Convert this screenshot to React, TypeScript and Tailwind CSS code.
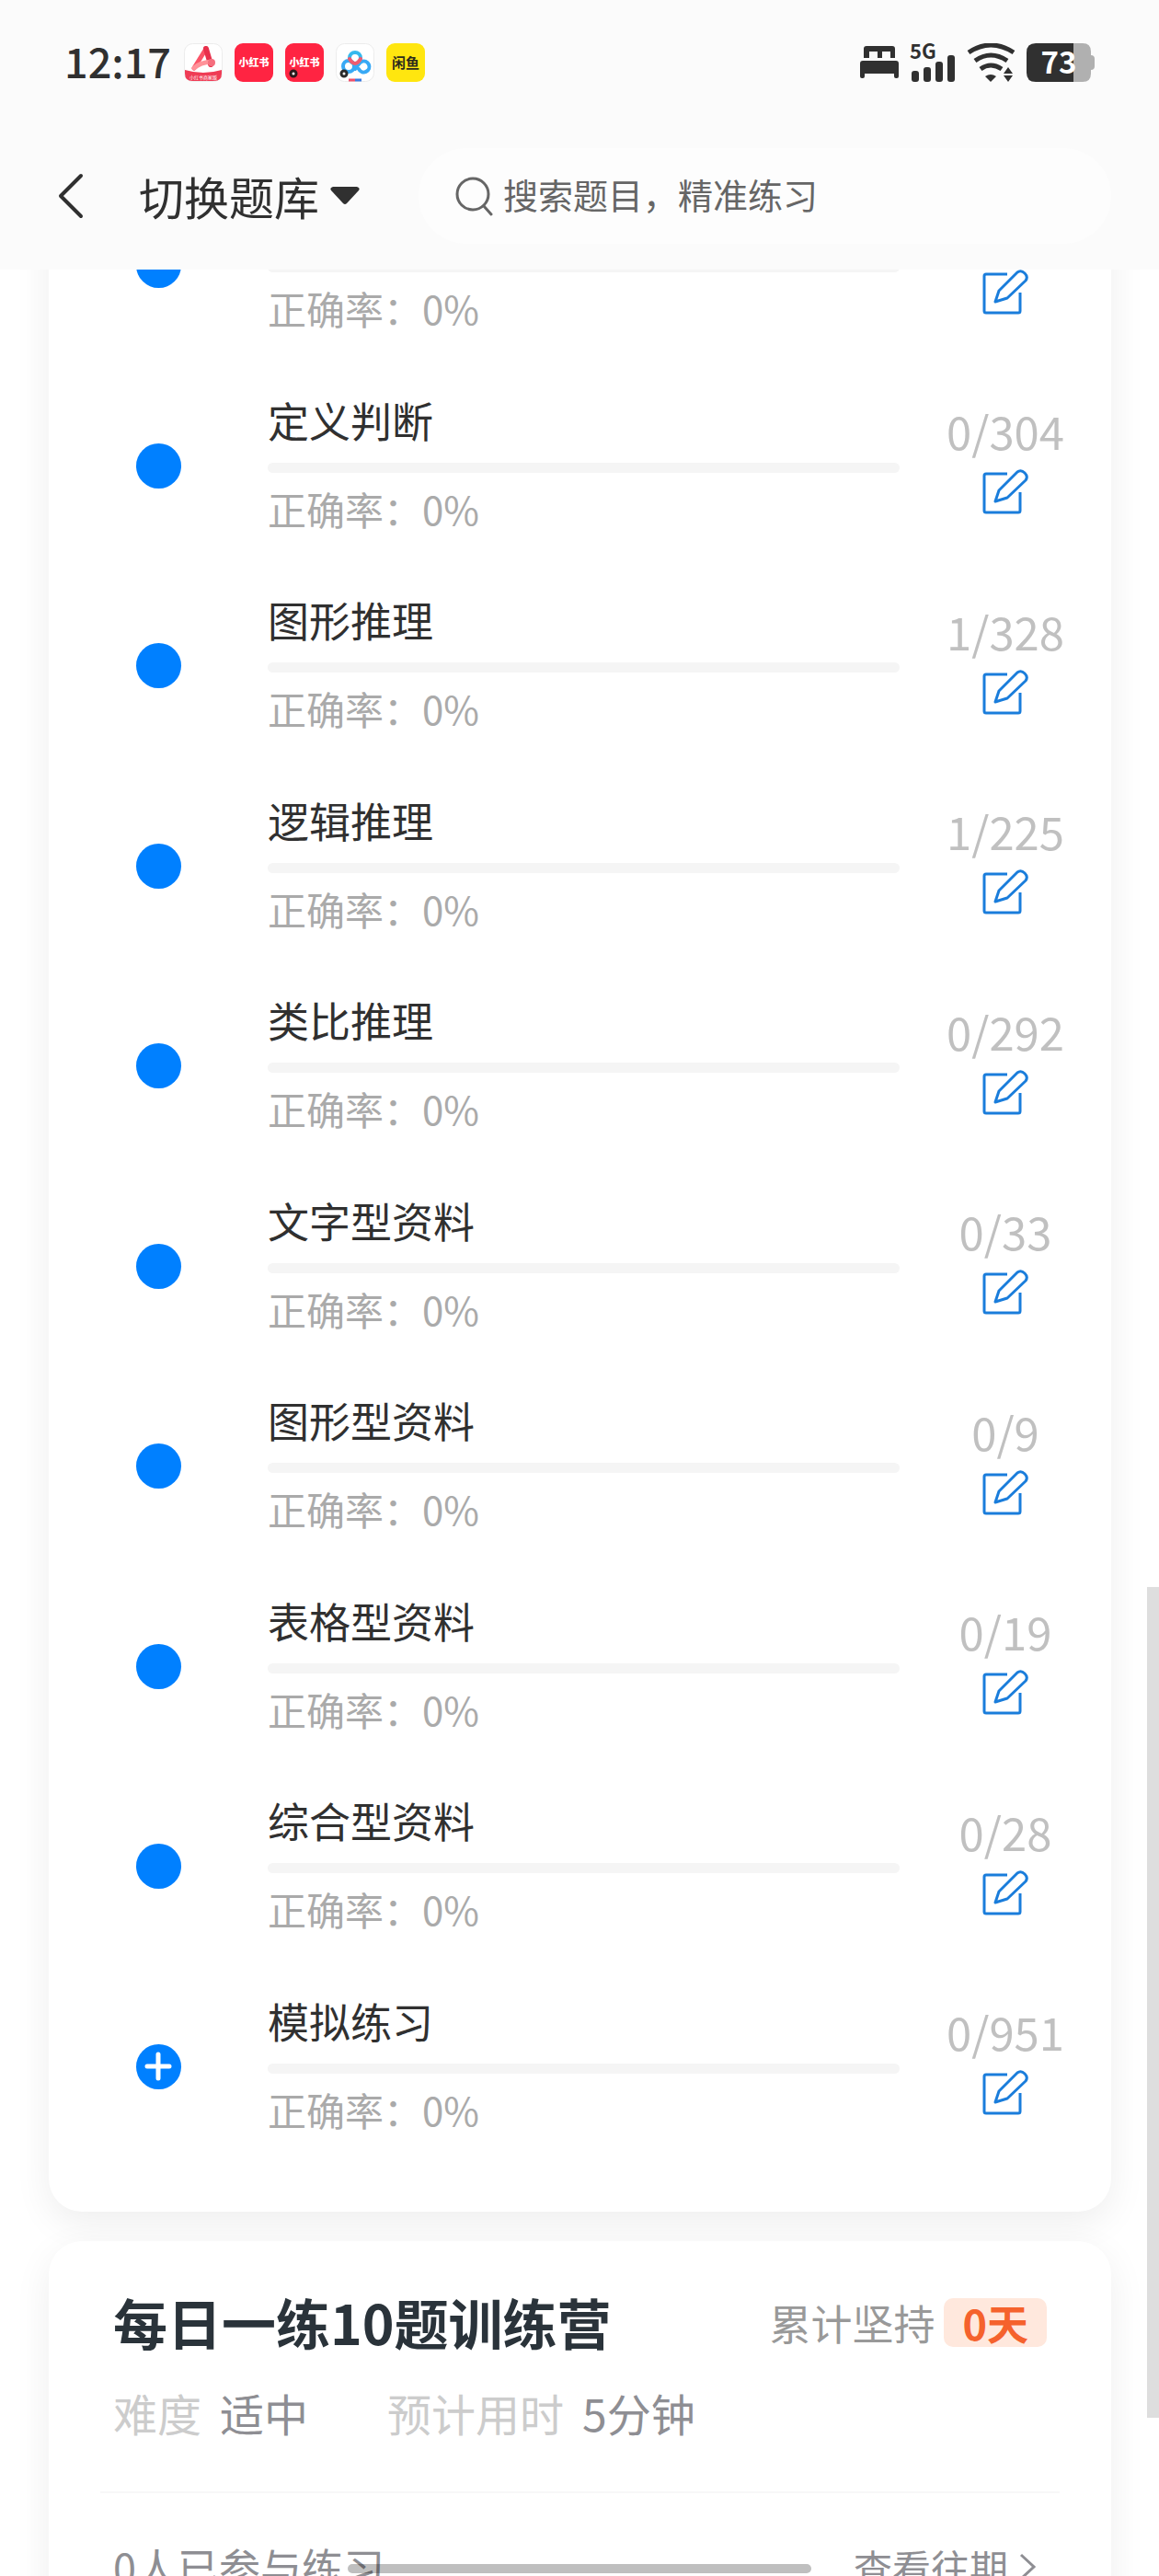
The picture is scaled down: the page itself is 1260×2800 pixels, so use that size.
import { useState } from 'react'

interface Topic {
  id: string
  name: string
  count: string
  expandable?: boolean
}

const topics: Topic[] = [
  { id: 'previous', name: '', count: '' },
  { id: 'definition', name: '定义判断', count: '0/304' },
  { id: 'figure', name: '图形推理', count: '1/328' },
  { id: 'logic', name: '逻辑推理', count: '1/225' },
  { id: 'analogy', name: '类比推理', count: '0/292' },
  { id: 'text-data', name: '文字型资料', count: '0/33' },
  { id: 'figure-data', name: '图形型资料', count: '0/9' },
  { id: 'table-data', name: '表格型资料', count: '0/19' },
  { id: 'mixed-data', name: '综合型资料', count: '0/28' },
  { id: 'mock', name: '模拟练习', count: '0/951', expandable: true }
]

function NoteIcon() {
  return (
    <svg viewBox="0 0 42 42" className="w-[42px] h-[42px] overflow-visible">
      <rect x="0.5" y="0.5" width="41" height="41" rx="9" fill="#fff" stroke="#ececec" />
      <path d="M1 29q20 6 40 0v4q0 8-8 8H9q-8 0-8-8z" fill="#ef3c55" />
      <path d="M24 6L11 27" stroke="#fb5468" strokeWidth="5" strokeLinecap="round" />
      <path d="M24 6l5 17" stroke="#e8304c" strokeWidth="6" strokeLinecap="round" />
      <path d="M11 27q6-6 19-7" stroke="#ff9299" strokeWidth="5" strokeLinecap="round" fill="none" />
      <circle cx="30" cy="21" r="4" fill="#f56f7e" />
      <text x="21" y="39" textAnchor="middle" fontSize="5" fill="#fff">小红书商家版</text>
    </svg>
  )
}

function RedIcon({ dot = false }: { dot?: boolean }) {
  return (
    <svg viewBox="0 0 42 42" className="w-[42px] h-[42px] overflow-visible">
      <rect width="42" height="42" rx="9" fill="#ff2442" />
      <text x="21" y="25" textAnchor="middle" fontSize="11" fontWeight="900" fill="#fff">小红书</text>
      {dot && <circle cx="9" cy="33" r="3" fill="#fff" stroke="#2b1a1c" strokeWidth="3" />}
    </svg>
  )
}

function CloudIcon() {
  return (
    <svg viewBox="0 0 42 42" className="w-[42px] h-[42px]">
      <rect x="0.5" y="0.5" width="41" height="41" rx="9" fill="#fff" stroke="#ececec" />
      <g fill="none" strokeWidth="4" strokeLinecap="round">
        <path d="M25 28a6 6 0 1 0 3-8q-2 1-7 8" stroke="#38a9f5" />
        <circle cx="14" cy="25" r="6" stroke="#38a9f5" />
        <circle cx="21" cy="16" r="6" stroke="#35b9ee" />
        <path d="M15 17q6 10 12 0" stroke="#ef5b70" />
      </g>
      <circle cx="9" cy="33" r="3" fill="#fff" stroke="#2b2b2b" strokeWidth="3" />
      <path d="M14 40h7" stroke="#f0506a" strokeWidth="3" />
      <path d="M21 40h7" stroke="#3a7be0" strokeWidth="3" />
    </svg>
  )
}

function FishIcon() {
  return (
    <svg viewBox="0 0 42 42" className="w-[42px] h-[42px] overflow-visible">
      <rect width="42" height="42" rx="9" fill="#ffe60f" />
      <text x="21" y="27" textAnchor="middle" fontSize="15" fontWeight="700" fill="#2b2b1c">闲鱼</text>
    </svg>
  )
}

function BedIcon() {
  return (
    <svg viewBox="0 0 42 36" className="w-[42px] h-[36px]" fill="#303030">
      <path d="M4 13V3q0-3 3-3h28q3 0 3 3v10h-5V6h-9v7h-5V6h-9v7z" />
      <path d="M0 19q0-3 3-3h36q3 0 3 3v14q0 2-2 2h-1q-2 0-2-2v-3H5v3q0 2-2 2H2q-2 0-2-2z" />
    </svg>
  )
}

function SignalIcon() {
  return (
    <svg viewBox="0 0 50 42" className="w-[50px] h-[42px] overflow-visible" fill="#303030">
      <text x="0" y="17" fontSize="22" fontWeight="700">5G</text>
      <rect x="2" y="30" width="8" height="12" rx="3" />
      <rect x="15" y="26" width="8" height="16" rx="3" />
      <rect x="28" y="20" width="8" height="22" rx="3" />
      <rect x="41" y="13" width="8" height="29" rx="3" />
    </svg>
  )
}

function WifiIcon() {
  return (
    <svg viewBox="0 0 53 42" className="w-[53px] h-[42px]">
      <g fill="none" stroke="#303030" strokeWidth="5">
        <path d="M2 10q24-16 49 0" />
        <path d="M9 19q17-12 35 0" />
        <path d="M15 28q11-8 23 0" />
      </g>
      <path d="M20 36q6-4 12 0l-6 6z" fill="#303030" />
      <path d="M40 33l5-7 5 7zM40 35h10l-5 7z" fill="#303030" />
    </svg>
  )
}

function BatteryIcon() {
  return (
    <svg viewBox="0 0 74 42" className="w-[74px] h-[42px] overflow-visible">
      <path d="M51 0h10q9 0 9 9v4q4 0 4 4v8q0 4-4 4v4q0 9-9 9H51z" fill="#b0b0b0" />
      <path d="M51 0H10Q0 0 0 10v22q0 10 10 10h41z" fill="#303030" />
      <text x="35" y="33" textAnchor="middle" fontSize="33" fontWeight="700" fill="#fff">73</text>
    </svg>
  )
}

function EditIcon() {
  return (
    <svg viewBox="0 0 50 50" className="w-[50px] h-[50px]" fill="none" stroke="#1a7ddb" strokeWidth="3" strokeLinejoin="round">
      <path d="M27 5H4q-2 0-2 2v38q0 2 2 2h35q2 0 2-2V25" />
      <path d="M14 35l4-12L38 3q4-3 8 1t1 8L27 31z" />
    </svg>
  )
}

function TopicRow({ topic }: { topic: Topic }) {
  return (
    <li className="flex items-center h-[217px] even:h-[218px]">
      <div className="flex w-[238px] shrink-0 justify-center">
        <button aria-label={topic.name || '展开'} className="flex w-[49px] h-[49px] items-center justify-center rounded-full bg-[#0080ff]">
          {topic.expandable && (
            <svg viewBox="0 0 30 36" className="w-[30px] h-[36px]" stroke="#fff" strokeWidth="5" strokeLinecap="round">
              <path d="M15 5v26M3 18h24" />
            </svg>
          )}
        </button>
      </div>
      <div className="flex-1 pb-[3px]">
        <h3 className="h-[60px] text-[45px] leading-[60px] text-[#303030]">{topic.name}</h3>
        <div className="mt-4 h-[11px] rounded-full bg-[#f5f5f5]" />
        <p className="mt-[9px] text-[42px] leading-[60px] text-[#aaaaaa]">正确率：0%</p>
      </div>
      <div className="flex w-[230px] shrink-0 flex-col items-center pb-[14px]">
        <span className="h-[60px] text-[49px] leading-[60px] text-[#c0c0c0]">{topic.count}</span>
        <button aria-label="练习" className="mt-3">
          <EditIcon />
        </button>
      </div>
    </li>
  )
}

export default function App() {
  const [query, setQuery] = useState('')

  return (
    <div className="relative flex h-screen flex-col overflow-hidden bg-white font-['Noto_Sans_CJK_SC',sans-serif]">
      <header className="z-10 shrink-0 bg-[#fbfbfb] pb-7">
        {/* Status bar */}
        <div className="flex h-[136px] items-center justify-between px-[70px]">
          <div className="flex items-center gap-[13px]">
            <span className="w-[117px] pb-1 text-[45px] font-medium leading-[60px] text-[#303030]">12:17</span>
            <NoteIcon />
            <RedIcon />
            <RedIcon dot />
            <CloudIcon />
            <FishIcon />
          </div>
          <div className="flex items-center gap-3">
            <BedIcon />
            <SignalIcon />
            <WifiIcon />
            <BatteryIcon />
          </div>
        </div>

        {/* Navigation and search */}
        <div className="mt-[25px] flex h-[104px] items-center pl-[62px] pr-[52px]">
          <button aria-label="返回">
            <svg viewBox="0 0 30 50" className="w-[30px] h-[50px]" fill="none" stroke="#303030" strokeWidth="4" strokeLinecap="round" strokeLinejoin="round">
              <path d="M26 3L4 25l22 22" />
            </svg>
          </button>
          <button className="ml-[59px] flex items-center gap-3 text-[49px] leading-[60px] text-[#303030]">
            切换题库
            <svg viewBox="0 0 32 20" className="w-[32px] h-[20px]" fill="#303030">
              <path d="M3 0h26q4 1 2 4L18 18q-2 2-4 0L1 4Q-1 1 3 0z" />
            </svg>
          </button>
          <label className="ml-16 flex h-full flex-1 items-center gap-2.5 rounded-full bg-[#fdfdfd] pl-[40px]">
            <svg viewBox="0 0 42 44" className="w-[42px] h-[44px] shrink-0" fill="none" stroke="#666" strokeWidth="3" strokeLinecap="round">
              <circle cx="19" cy="20" r="17" />
              <path d="M31 33l8 9" />
            </svg>
            <input
              aria-label="搜索"
              value={query}
              onChange={(e) => setQuery(e.target.value)}
              placeholder="搜索题目，精准练习"
              className="h-[66px] w-full min-w-0 bg-transparent pb-1.5 text-[38px] text-[#666] outline-none placeholder:text-[#666]"
            />
          </label>
        </div>
      </header>

      <main className="min-h-0 flex-1 overflow-hidden pl-[53px] pr-[52px]">
        {/* Topic list, scrolled part of the way down */}
        <section className="-mt-[113px] rounded-[36px] bg-white pb-[49px] shadow-[0_12px_40px_rgba(0,0,0,0.07)]">
          <ul>
            {topics.map(topic => (
              <TopicRow key={topic.id} topic={topic} />
            ))}
          </ul>
        </section>

        {/* Daily practice */}
        <section className="relative mt-8 rounded-[36px] bg-white px-14 pb-16 pt-12 shadow-[0_12px_40px_rgba(0,0,0,0.07)]">
          <div className="flex items-center justify-between px-3.5">
            <h2 className="text-[59px] font-bold leading-[80px] text-[#2a333a]">每日一练10题训练营</h2>
            <div className="flex items-center gap-2.5 text-[45px] leading-[53px] text-[#999]">
              累计坚持
              <span className="rounded-[10px] bg-[#ffe8dd] px-5 font-bold text-[#f5622d]">0天</span>
            </div>
          </div>
          <div className="mt-7 flex px-3.5 text-[48px] leading-[60px] text-[#8e8e93]">
            <p className="flex gap-5"><span className="text-[#cccccc]">难度</span>适中</p>
            <p className="ml-[86px] flex gap-5"><span className="text-[#cccccc]">预计用时</span>5分钟</p>
          </div>
          <hr className="mt-14 border-t-2 border-[#f8f8f8]" />
          <div className="mt-[50px] flex items-center justify-between pl-3.5 pr-6 leading-[60px] text-[#8e8e93]">
            <span className="text-[45px]">0人已参与练习</span>
            <a href="#history" className="flex items-center gap-3 text-[42px]">
              查看往期
              <svg viewBox="0 0 20 30" className="w-[20px] h-[30px]" fill="none" stroke="#8e8e93" strokeWidth="3">
                <path d="M2 2l14 13L2 28" />
              </svg>
            </a>
          </div>
        </section>
      </main>

      {/* Scrollbar and home indicator */}
      <div className="absolute right-0 top-[1725px] h-[903px] w-[13px] bg-[#dedede]" />
      <div className="absolute bottom-[3px] left-1/2 h-[10px] w-[504px] -translate-x-1/2 rounded-full bg-black/25" />
    </div>
  )
}
